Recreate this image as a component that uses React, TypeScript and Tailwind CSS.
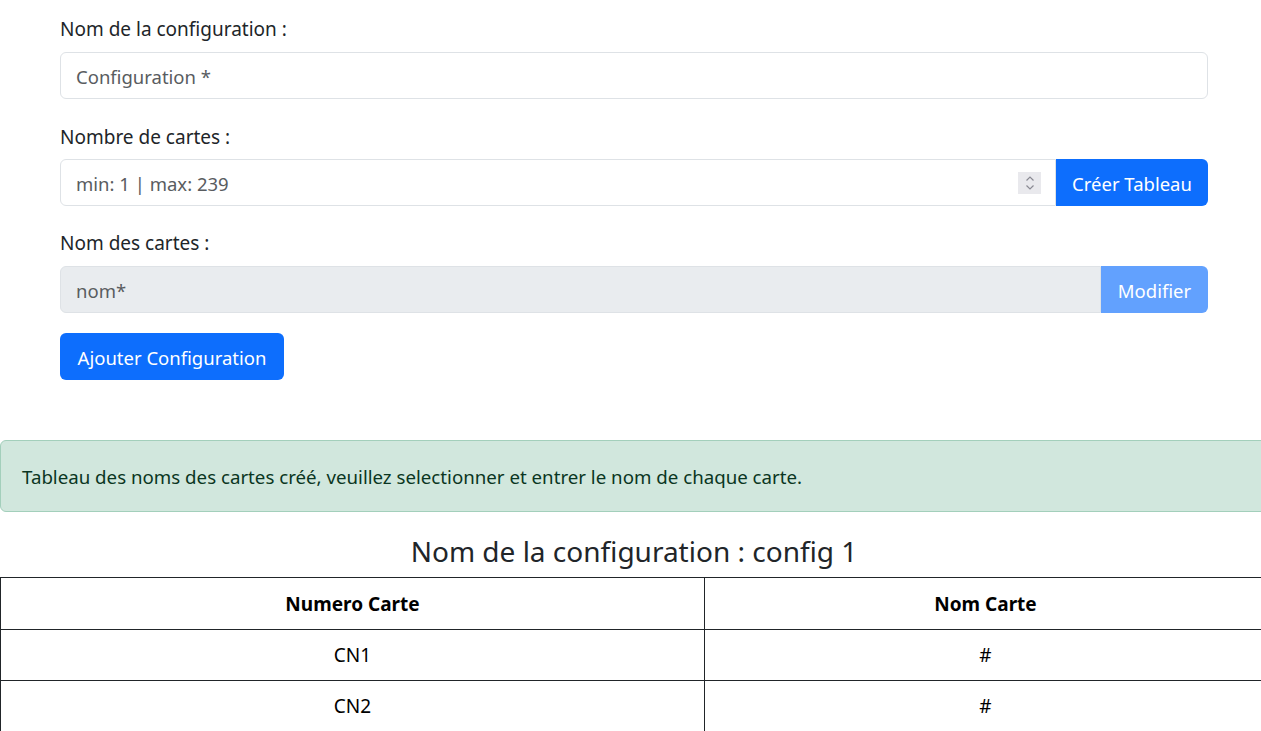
import React from "react";

const font = { fontFamily: '"Noto Sans", "Open Sans", sans-serif' };

function Spinner() {
  return (
    <div className="w-[23px] h-[22px] bg-[#e9e9ed] flex items-center justify-center">
      <svg width="10" height="16" viewBox="0 0 10 16" fill="none" stroke="#8a8a93" strokeWidth="1.2">
        <path d="M1.5 5.5 L5 2 L8.5 5.5" />
        <path d="M1.5 10.5 L5 14 L8.5 10.5" />
      </svg>
    </div>
  );
}

export default function App() {
  return (
    <div className="w-[1261px] h-[731px] overflow-hidden bg-white text-[#212529] text-[19px] leading-[30px]" style={font}>
      <div className="pl-[60px] pr-[53px] pt-[14px]">
        <div className="mb-[8px]">Nom de la configuration :</div>
        <div className="h-[47px] border border-[#dee2e6] rounded-[6px] flex items-center px-[15px] pt-[2px] text-[#595c5f] text-[18.5px]">
          Configuration *
        </div>

        <div className="mt-[23px] mb-[7px]">Nombre de cartes :</div>
        <div className="flex h-[47px]">
          <div className="flex-1 border border-[#dee2e6] rounded-l-[6px] flex items-center pl-[15px] pr-[14px] text-[#595c5f] text-[18.5px]">
            <span className="flex-1 pt-[2px]">min: 1 | max: 239</span>
            <Spinner />
          </div>
          <div className="w-[152px] bg-[#0d6efd] text-white rounded-r-[6px] flex items-center justify-center pt-[2px] text-[18.5px]">
            Créer Tableau
          </div>
        </div>

        <div className="mt-[22px] mb-[8px]">Nom des cartes :</div>
        <div className="flex h-[47px]">
          <div className="flex-1 bg-[#e9ecef] border border-[#dee2e6] rounded-l-[6px] flex items-center pl-[15px] pt-[2px] text-[#595c5f] text-[18.5px]">
            nom*
          </div>
          <div className="w-[107px] bg-[#62a1fe] text-white rounded-r-[6px] flex items-center justify-center pt-[2px] text-[18.5px]">
            Modifier
          </div>
        </div>

        <div className="mt-[20px] w-[224px] h-[47px] bg-[#0d6efd] text-white rounded-[6px] flex items-center justify-center pt-[2px] text-[18.5px]">
          Ajouter Configuration
        </div>
      </div>

      <div className="mt-[60px] w-[1275px] h-[72px] bg-[#d1e7dd] border border-[#a3cfbb] rounded-[6px] flex items-center pl-[21px] pt-[2px] text-[#0a3622] text-[18.7px]">
        Tableau des noms des cartes créé, veuillez selectionner et entrer le nom de chaque carte.
      </div>

      <div className="mt-[22px] w-[1268px] text-center text-[28px] leading-[34px] text-[#212529]">
        Nom de la configuration : config 1
      </div>

      <table className="mt-[9px] w-[1267px] border-collapse text-black text-[19px]" style={font}>
        <tbody>
          <tr className="h-[52px]">
            <th className="w-[704px] border border-[#212529] font-bold text-center">Numero Carte</th>
            <th className="border border-[#212529] font-bold text-center">Nom Carte</th>
          </tr>
          <tr className="h-[51px]">
            <td className="border border-[#212529] text-center">CN1</td>
            <td className="border border-[#212529] text-center">#</td>
          </tr>
          <tr className="h-[51px]">
            <td className="border border-[#212529] text-center">CN2</td>
            <td className="border border-[#212529] text-center">#</td>
          </tr>
        </tbody>
      </table>
    </div>
  );
}
